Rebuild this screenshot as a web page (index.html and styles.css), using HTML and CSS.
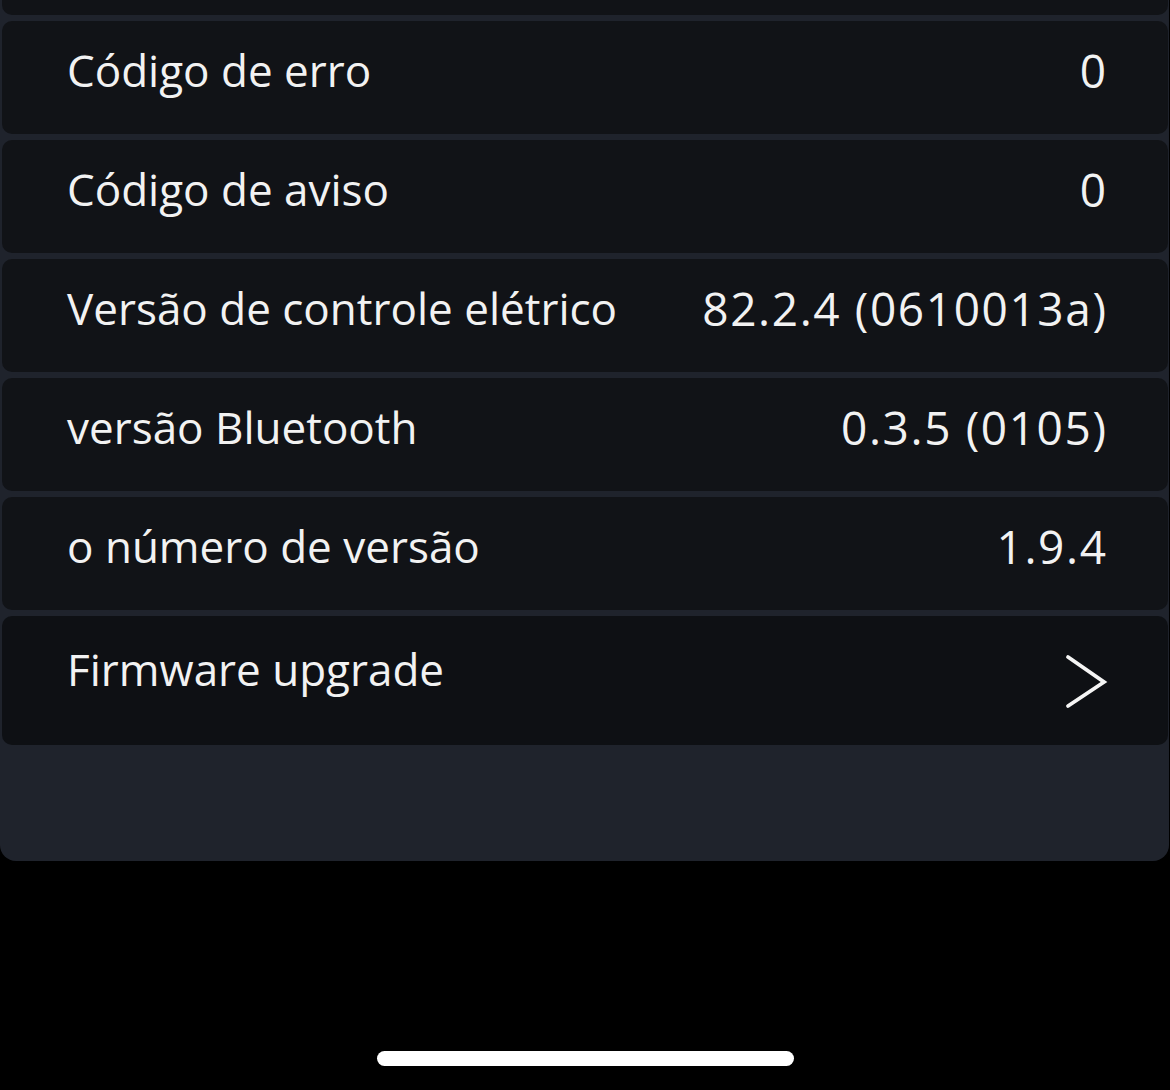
FILE: index.html
```html
<!DOCTYPE html>
<html lang="pt">
  <head>
    <meta charset="UTF-8">
    <meta name="viewport" content="width=device-width, initial-scale=1.0">
    <title>Informações do dispositivo</title>
    <link rel="stylesheet" href="styles.css">
  </head>
  <body>
    <div class="screen">
      <!-- Device info list -->
      <div class="panel">
        <div class="row row-cut"></div>
        <div class="row">
          <span class="label">Código de erro</span>
          <span class="value">0</span>
        </div>
        <div class="row">
          <span class="label">Código de aviso</span>
          <span class="value">0</span>
        </div>
        <div class="row">
          <span class="label">Versão de controle elétrico</span>
          <span class="value">82.2.4 (0610013a)</span>
        </div>
        <div class="row">
          <span class="label">versão Bluetooth</span>
          <span class="value">0.3.5 (0105)</span>
        </div>
        <div class="row">
          <span class="label">o número de versão</span>
          <span class="value">1.9.4</span>
        </div>
        <div class="row row-link">
          <span class="label">Firmware upgrade</span>
          <svg class="chevron" width="44" height="56" viewBox="0 0 44 56">
            <polyline points="4,4 40,29 4,53" fill="none" stroke="#f5f5f5" stroke-width="3.8" stroke-linecap="round" stroke-linejoin="miter"/>
          </svg>
        </div>
      </div>

      <div class="home-bar"></div>
    </div>
  </body>
</html>
```

FILE: styles.css
```css
/* General Styles */
body {
  margin: 0;
  padding: 0;
  background: #000;
  font-family: 'Open Sans', 'Noto Sans', sans-serif;
  color: #f2f2f2;
}

.screen {
  width: 1170px;
  height: 1090px;
  overflow: hidden;
  display: flex;
  flex-direction: column;
}

/* Info list */
.panel {
  width: 1166px;
  padding: 0 1px 116px 2px;
  background: #1f232c;
  border-radius: 0 0 16px 16px;
  display: flex;
  flex-direction: column;
  gap: 6px;
}

.row {
  height: 113px;
  background: #111317;
  border-radius: 10px;
  display: flex;
  align-items: center;
  justify-content: space-between;
  padding: 0 62px 16px 65px;
  box-sizing: border-box;
  font-size: 44px;
}

.row-cut {
  height: 15px;
  padding: 0;
  border-radius: 0 0 10px 10px;
}

.row-link {
  height: 129px;
  background: #0e1014;
  padding-bottom: 24px;
}

.row-link .chevron {
  margin-top: 24px;
  margin-right: -2px;
}

.label,
.value {
  white-space: nowrap;
  line-height: 1;
}

.value {
  font-size: 46px;
  letter-spacing: 1.6px;
  margin-right: -1.6px;
}

/* iOS home indicator */
.home-bar {
  width: 417px;
  height: 15px;
  margin: 190px auto 0;
  background: #fff;
  border-radius: 8px;
}
```
